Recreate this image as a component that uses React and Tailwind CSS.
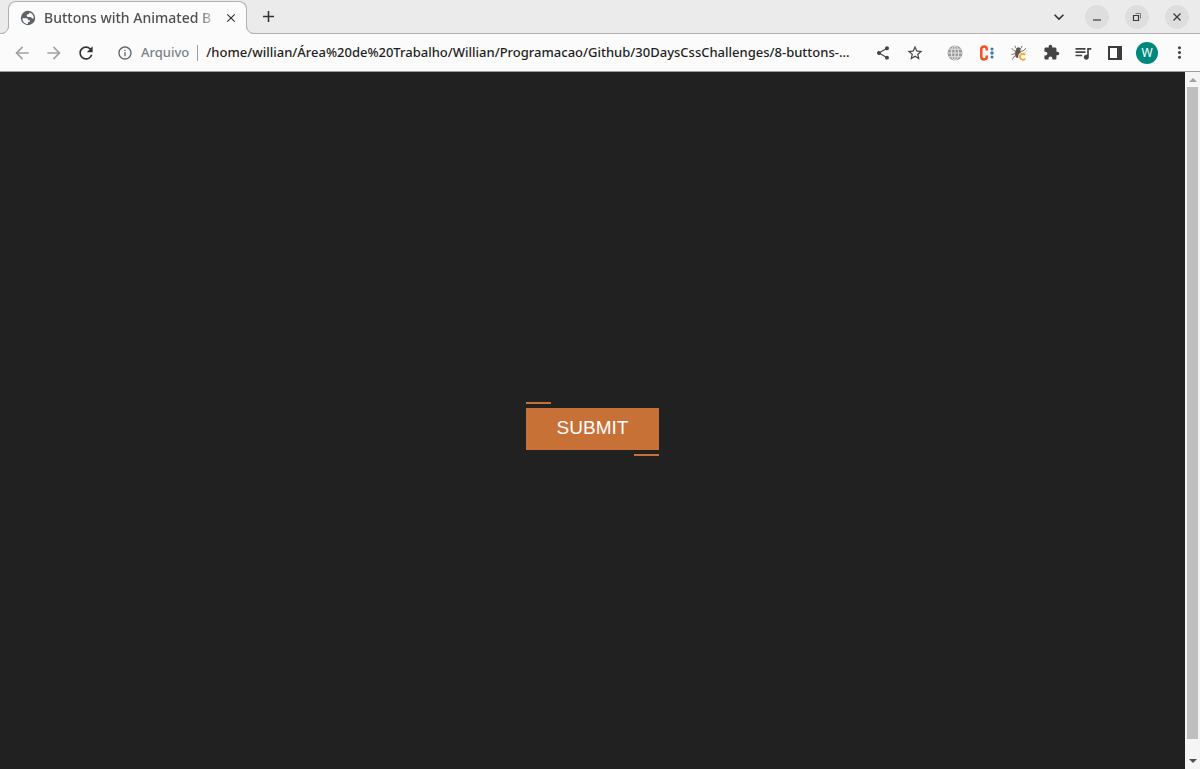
import {
  MdAdd,
  MdArrowBack,
  MdArrowForward,
  MdClose,
  MdExtension,
  MdInfoOutline,
  MdKeyboardArrowDown,
  MdMoreVert,
  MdQueueMusic,
  MdRefresh,
  MdShare,
  MdStarBorder,
} from "react-icons/md";

const PATH =
  "/home/willian/Área%20de%20Trabalho/Willian/Programacao/Github/30DaysCssChallenges/8-buttons-…";

function FaviconGlobe() {
  return (
    <svg className="shrink-0" width="16" height="16" viewBox="0 0 16 16">
      <circle cx="8" cy="8" r="7.2" fill="#5f6368" />
      <path
        d="M2.400 8.200h3.800c1.500 0 2 .8 2 2h1.600v1.900H7.900v1.900C4.800 14 2.400 11.500 2.400 8.200z"
        fill="#fbfbfb"
      />
      <path
        d="M9.300 2.500c2.700.6 4.500 2.900 4.500 5.700-.6.5-1.500.4-2-.3-.4-.6-1-.8-1.800-.8H8.400c-1 0-1.700-.6-1.700-1.500s.6-1.300 1.500-1.300c.8 0 1.100-.4 1.100-1.800z"
        fill="#fbfbfb"
      />
    </svg>
  );
}

function GridGlobeIcon() {
  return (
    <svg width="16" height="16" viewBox="0 0 16 16" fill="none">
      <circle cx="8" cy="8" r="7.5" fill="#9c9c9c" />
      <g stroke="#ececec" strokeWidth="0.9">
        <ellipse cx="8" cy="8" rx="3.6" ry="7.5" />
        <path d="M8 0.5V15.5M0.5 8H15.5M1.8 4.2H14.2M1.8 11.8H14.2" />
      </g>
    </svg>
  );
}

function ColonCIcon() {
  return (
    <svg width="16" height="16" viewBox="0 0 16 16" fill="none">
      <path
        d="M7.800 5.600V4.200C7.800 2.400 6.800 1.600 5.100 1.600S2.300 2.500 2.300 4.300v7.400c0 1.800 1.100 2.700 2.800 2.700s2.700-.9 2.700-2.600v-1.400"
        stroke="#f4511e"
        strokeWidth="2.500"
      />
      <circle cx="13" cy="4" r="1.500" fill="#546e7a" />
      <circle cx="13" cy="8" r="1.800" fill="#1e88e5" />
      <circle cx="13" cy="12" r="1.500" fill="#546e7a" />
    </svg>
  );
}

function BugIcon() {
  return (
    <svg width="16" height="16" viewBox="0 0 16 16" fill="none">
      <ellipse cx="7" cy="8.500" rx="3" ry="4.600" fill="#5f5550" />
      <circle cx="7.500" cy="4.300" r="2" fill="#5f5550" />
      <path
        d="M4 .8l.5 2L6 4M11 .8l-.5 2L9 4M.8 3.200l2 2.300L5 6.500M14.800 3.200l-2 2.300L9.500 6.500M.5 9.500L5 8.500M1.500 14.500l1-2.500L5 10.500M9.500 8.500l5-.5"
        stroke="#7d726c"
      />
      <path d="M14.200 9.800a3 3 0 1 0 0 3.900" stroke="#fbfbfb" strokeWidth="3.600" />
      <path d="M14.200 9.800a3 3 0 1 0 0 3.900" stroke="#f9a825" strokeWidth="1.800" />
    </svg>
  );
}

function SidePanelIcon() {
  return (
    <svg width="16" height="16" viewBox="0 0 16 16" fill="none">
      <rect x="2" y="2" width="12" height="12" stroke="#3c3c3c" strokeWidth="2" />
      <path d="M10 2h5v12h-5z" fill="#3c3c3c" />
    </svg>
  );
}

function ToolButton({ label, children }) {
  return (
    <button
      type="button"
      aria-label={label}
      className="flex h-8 w-8 shrink-0 items-center justify-center text-[#444444]"
    >
      {children}
    </button>
  );
}

function WindowButton({ label, children }) {
  return (
    <button
      type="button"
      aria-label={label}
      className="flex h-6 w-6 items-center justify-center rounded-full bg-[#dedede] text-[#3a3a3a]"
    >
      <svg width="12" height="12" viewBox="0 0 12 12" fill="none" stroke="currentColor">
        {children}
      </svg>
    </button>
  );
}

function TabStrip() {
  return (
    <div className="flex h-[34px] items-stretch border-b border-[#b0b0b0] bg-[#ebebeb] pl-2">
      <div className="relative -mb-px mt-px flex w-[239px] items-center rounded-t-lg border border-b-0 border-[#b0b0b0] bg-[#fbfbfb] pl-[11px] pr-2">
        <svg className="absolute -left-2 bottom-0" width="8" height="8" viewBox="0 0 8 8">
          <path d="M8 0A8 8 0 0 1 0 8H8z" fill="#fbfbfb" />
          <path d="M7.500 0A7.500 7.500 0 0 1 0 7.500" fill="none" stroke="#b0b0b0" />
        </svg>
        <svg className="absolute -right-2 bottom-0" width="8" height="8" viewBox="0 0 8 8">
          <path d="M0 0A8 8 0 0 0 8 8H0z" fill="#fbfbfb" />
          <path d="M0.500 0A7.500 7.500 0 0 0 8 7.500" fill="none" stroke="#b0b0b0" />
        </svg>
        <FaviconGlobe />
        <span className="ml-2 min-w-0 flex-1 overflow-hidden whitespace-nowrap text-sm font-medium text-[#505050] [mask-image:linear-gradient(to_right,black_88%,transparent)]">
          Buttons with Animated B
        </span>
        <button type="button" aria-label="Close tab" className="ml-1.5 text-[#333333]">
          <MdClose size={14} />
        </button>
      </div>
      <button type="button" aria-label="New tab" className="ml-3 text-[#333333]">
        <MdAdd size={19} />
      </button>
      <div className="ml-auto flex items-center gap-4 pr-[11px]">
        <button type="button" aria-label="Search tabs" className="text-[#333333]">
          <MdKeyboardArrowDown size={20} />
        </button>
        <WindowButton label="Minimize">
          <path d="M2 9h8" strokeWidth="1.200" />
        </WindowButton>
        <WindowButton label="Restore">
          <path d="M2.500 4.500h5v5h-5z" strokeWidth="1.200" />
          <path d="M4.500 2.500h5v5" opacity="0.6" />
        </WindowButton>
        <WindowButton label="Close">
          <path d="M2.500 2.500l7 7M9.500 2.500l-7 7" strokeWidth="1.300" />
        </WindowButton>
      </div>
    </div>
  );
}

function Toolbar() {
  return (
    <div className="flex h-[38px] items-center border-b border-[#9e9e9e] bg-[#fbfbfb] pl-1.5 pr-[5px]">
      <button type="button" aria-label="Back" className="flex w-8 justify-center text-[#a3a3a3]">
        <MdArrowBack size={20} />
      </button>
      <button type="button" aria-label="Forward" className="flex w-8 justify-center text-[#a3a3a3]">
        <MdArrowForward size={20} />
      </button>
      <button type="button" aria-label="Reload" className="flex w-8 justify-center text-[#333333]">
        <MdRefresh size={20} />
      </button>
      <label className="ml-[15px] flex min-w-0 flex-1 items-center text-[13px] font-medium">
        <MdInfoOutline size={16} className="shrink-0 text-[#5f6368]" />
        <span className="ml-2 text-[#7c8084]">Arquivo</span>
        <span className="mx-2 h-4 w-px bg-[#9e9e9e]" />
        <input
          type="text"
          aria-label="Address"
          defaultValue={PATH}
          className="min-w-0 flex-1 bg-transparent text-[#1f1f1f] outline-none"
        />
      </label>
      <ToolButton label="Share">
        <MdShare size={16} />
      </ToolButton>
      <ToolButton label="Bookmark">
        <MdStarBorder size={18} />
      </ToolButton>
      <div className="ml-2 flex items-center">
        <ToolButton label="Web extension">
          <GridGlobeIcon />
        </ToolButton>
        <ToolButton label="Color extension">
          <ColonCIcon />
        </ToolButton>
        <ToolButton label="Debug extension">
          <BugIcon />
        </ToolButton>
        <ToolButton label="Extensions">
          <MdExtension size={17} />
        </ToolButton>
        <ToolButton label="Media controls">
          <MdQueueMusic size={20} />
        </ToolButton>
        <ToolButton label="Side panel">
          <SidePanelIcon />
        </ToolButton>
        <ToolButton label="Profile">
          <span className="flex h-[22px] w-[22px] items-center justify-center rounded-full bg-[#00897b] text-xs text-white">
            W
          </span>
        </ToolButton>
        <ToolButton label="Menu">
          <MdMoreVert size={19} />
        </ToolButton>
      </div>
    </div>
  );
}

function ScrollTrack() {
  return (
    <div className="flex w-[15px] flex-col items-center bg-[#f5f5f5]">
      <div className="flex h-[15px] items-center">
        <svg width="8" height="4" viewBox="0 0 8 4">
          <path d="M0 4L4 0L8 4z" fill="#a0a0a0" />
        </svg>
      </div>
      <div className="w-[11px] flex-1 bg-[#c0bfbf]" />
      <div className="flex h-[30px] items-end pb-[6px]">
        <svg width="8" height="4" viewBox="0 0 8 4">
          <path d="M0 0L4 4L8 0z" fill="#505050" />
        </svg>
      </div>
    </div>
  );
}

export default function App() {
  return (
    <div className="flex h-screen flex-col font-['Noto_Sans',sans-serif]">
      <header>
        <TabStrip />
        <Toolbar />
      </header>
      <div className="flex min-h-0 flex-1">
        <main className="flex flex-1 items-center justify-center bg-[#212121] pt-4">
          <button
            type="button"
            className="relative h-[42px] bg-[#c87137] px-[31px] font-['Liberation_Sans',sans-serif] text-[19px] text-white before:absolute before:-top-1.5 before:left-0 before:h-0.5 before:w-[25px] before:bg-[#c87137] after:absolute after:-bottom-1.5 after:right-0 after:h-0.5 after:w-[25px] after:bg-[#c87137]"
          >
            SUBMIT
          </button>
        </main>
        <ScrollTrack />
      </div>
    </div>
  );
}
